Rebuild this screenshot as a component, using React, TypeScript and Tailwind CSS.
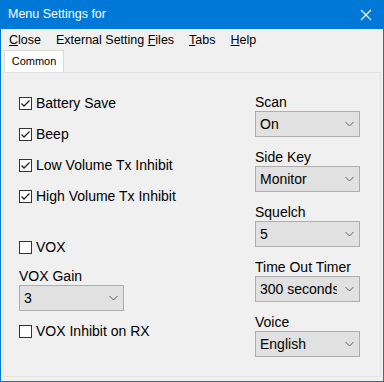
import { ReactNode } from 'react';

const font = { fontFamily: '"Liberation Sans", Arial, sans-serif' };

function CheckBox({ label, checked }: { label: string; checked?: boolean }) {
  return (
    <div className="flex h-[16px] items-center gap-[4px]">
      <div className="flex h-[13px] w-[13px] items-center justify-center border border-[#333333] bg-white">
        {checked && (
          <svg width="11" height="11" viewBox="0 0 11 11">
            <path d="M1.5 5.5 L4 8 L9.5 2.5" fill="none" stroke="#222222" strokeWidth="1.3" />
          </svg>
        )}
      </div>
      <span className="text-[14px] leading-[16px] text-black">{label}</span>
    </div>
  );
}

function Dropdown({ value }: { value: string }) {
  return (
    <div className="flex h-[26px] w-[105px] items-center border border-[#adadad] bg-[#e1e1e1] pl-[4px]">
      <span className="w-[77px] overflow-hidden whitespace-nowrap text-[14px] leading-[16px] text-black">
        {value}
      </span>
      <svg className="ml-auto mr-[5px]" width="9" height="6" viewBox="0 0 9 6">
        <path d="M0.5 1 L4.5 5 L8.5 1" fill="none" stroke="#606060" strokeWidth="1" />
      </svg>
    </div>
  );
}

function Field({ label, children }: { label: string; children: ReactNode }) {
  return (
    <div className="flex flex-col">
      <span className="text-[14px] leading-[16px] text-black">{label}</span>
      <div className="mt-px">{children}</div>
    </div>
  );
}

export default function App() {
  return (
    <div className="flex h-[382px] w-[384px] flex-col bg-[#0078d7] px-px pb-px" style={font}>
      {/* Title bar */}
      <div className="flex h-[29px] shrink-0 items-center justify-between pl-[7px] pr-[11px]">
        <span className="text-[12.5px] text-white">Menu Settings for</span>
        <svg width="12" height="12" viewBox="0 0 12 12">
          <path d="M1 1 L11 11 M11 1 L1 11" stroke="white" strokeWidth="1.1" />
        </svg>
      </div>

      {/* Body */}
      <div className="flex flex-1 flex-col bg-[#f0f0f0]">
        <div className="flex h-[21px] items-center gap-[15px] pl-[8px] text-[12.5px] leading-[20px] text-black">
          <span><u>C</u>lose</span>
          <span>External Setting <u>F</u>iles</span>
          <span><u>T</u>abs</span>
          <span><u>H</u>elp</span>
        </div>

        {/* Tabs */}
        <div className="flex pl-[3px]">
          <div className="flex h-[22px] w-[60px] items-center justify-center border border-b-0 border-[#d9d9d9] bg-white text-[11px] text-black">
            Common
          </div>
        </div>

        <div className="mx-[2px] mb-[4px] flex flex-1 border border-[#e3e3e3] bg-[#f0f0f0]">
          {/* Left column */}
          <div className="flex w-[251px] flex-col pl-[15px] pt-[22px]">
            <div className="flex flex-col gap-[15px]">
              <CheckBox label="Battery Save" checked />
              <CheckBox label="Beep" checked />
              <CheckBox label="Low Volume Tx Inhibit" checked />
              <CheckBox label="High Volume Tx Inhibit" checked />
            </div>
            <div className="mt-[35px]">
              <CheckBox label="VOX" />
            </div>
            <div className="mt-[13px]">
              <Field label="VOX Gain">
                <Dropdown value="3" />
              </Field>
            </div>
            <div className="mt-[12px]">
              <CheckBox label="VOX Inhibit on RX" />
            </div>
          </div>

          {/* Right column */}
          <div className="flex flex-col gap-[12px] pt-[21px]">
            <Field label="Scan">
              <Dropdown value="On" />
            </Field>
            <Field label="Side Key">
              <Dropdown value="Monitor" />
            </Field>
            <Field label="Squelch">
              <Dropdown value="5" />
            </Field>
            <Field label="Time Out Timer">
              <Dropdown value="300 seconds" />
            </Field>
            <Field label="Voice">
              <Dropdown value="English" />
            </Field>
          </div>
        </div>
      </div>
    </div>
  );
}
